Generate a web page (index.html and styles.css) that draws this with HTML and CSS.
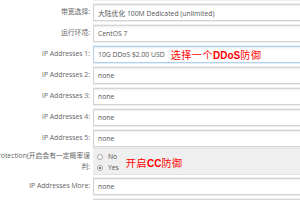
FILE: index.html
```html
<!DOCTYPE html>
<html>
<head>
<meta charset="utf-8">
<link rel="stylesheet" href="styles.css">
</head>
<body>
<div class="form">
  <div class="row">
    <div class="label"></div>
    <div class="field"><div class="input"></div></div>
  </div>
  <div class="row">
    <div class="label">带宽选择:</div>
    <div class="field"><div class="input">大陆优化 100M Dedicated (unlimited)</div></div>
  </div>
  <div class="row">
    <div class="label">运行环境:</div>
    <div class="field"><div class="input">CentOS 7</div></div>
  </div>
  <div class="row">
    <div class="label">IP Addresses 1:</div>
    <div class="field"><div class="input focus">10G DDoS $2.00 USD<span class="note">选择一个<b>DDoS</b>防御</span></div></div>
  </div>
  <div class="row">
    <div class="label">IP Addresses 2:</div>
    <div class="field"><div class="input">none</div></div>
  </div>
  <div class="row">
    <div class="label">IP Addresses 3:</div>
    <div class="field"><div class="input">none</div></div>
  </div>
  <div class="row">
    <div class="label">IP Addresses 4:</div>
    <div class="field"><div class="input">none</div></div>
  </div>
  <div class="row">
    <div class="label">IP Addresses 5:</div>
    <div class="field"><div class="input">none</div></div>
  </div>
  <div class="row row-radio">
    <div class="label label-multi">CC Protection(开启会有一定概率误<br>判:</div>
    <div class="field">
      <div class="radio-box">
        <div class="radios">
          <div class="opt"><span class="radio"></span>No</div>
          <div class="opt"><span class="radio checked"></span>Yes</div>
        </div>
        <span class="note note-cc">开启<b>CC</b>防御</span>
      </div>
    </div>
  </div>
  <div class="row">
    <div class="label">IP Addresses More:</div>
    <div class="field"><div class="input">none</div></div>
  </div>
  <div class="row">
    <div class="label"></div>
    <div class="field"><div class="input"></div></div>
  </div>
</div>
</body>
</html>
```
FILE: styles.css
```css
html, body {
  margin: 0;
  padding: 0;
  background: #fff;
  overflow: hidden;
  width: 300px;
  height: 200px;
}
.form {
  margin-left: -60px;
  margin-top: -17px;
  display: flex;
  flex-direction: column;
  gap: 4px;
  font-family: "Open Sans", "Noto Sans CJK SC", sans-serif;
  font-size: 6.8px;
}
.row {
  display: grid;
  grid-template-columns: 150px 420px;
  column-gap: 3px;
  align-items: center;
}
.label {
  text-align: right;
  color: #666;
  white-space: nowrap;
  line-height: 10.5px;
}
.input {
  box-sizing: border-box;
  height: 17px;
  border: 1px solid #d4d4d4;
  box-shadow: inset 0 1px 2px rgba(0,0,0,0.08), 0 1px 0 #ececec, 0 -1px 0 #f0f0f0;
  padding-left: 4px;
  color: #555;
  display: flex;
  align-items: center;
  background: #fff;
}
.input.focus {
  border-color: #b3d0ea;
  box-shadow: inset 0 1px 2px rgba(0,0,0,0.08), 0 1px 0 #e4eef7, 0 -1px 0 #e4eef7;
}
.note {
  color: #f00;
  font-family: "Noto Sans CJK SC", sans-serif;
  font-size: 10px;
  letter-spacing: 0.6px;
  margin-left: 6px;
}
.note b {
  font-family: "Liberation Sans", sans-serif;
  font-weight: bold;
  letter-spacing: 0;
}
.row-radio {
  margin-top: -3px;
  margin-bottom: -1px;
}
.radio-box {
  background: #efefef;
  border-top: 1px solid #e2e2e2;
  border-bottom: 1px solid #e2e2e2;
  padding: 3px 0 1px 4px;
  display: flex;
  align-items: center;
}
.radios {
  display: flex;
  flex-direction: column;
  color: #555;
  line-height: 10.5px;
}
.opt {
  display: flex;
  align-items: center;
}
.radio {
  box-sizing: border-box;
  width: 6px;
  height: 6px;
  border-radius: 50%;
  border: 1px solid #aaa;
  background: #fff;
  margin-right: 5px;
  position: relative;
}
.radio.checked::after {
  content: "";
  position: absolute;
  left: 1px;
  top: 1px;
  width: 2px;
  height: 2px;
  border-radius: 50%;
  background: #444;
}
.note-cc {
  margin-left: 7px;
}
```
